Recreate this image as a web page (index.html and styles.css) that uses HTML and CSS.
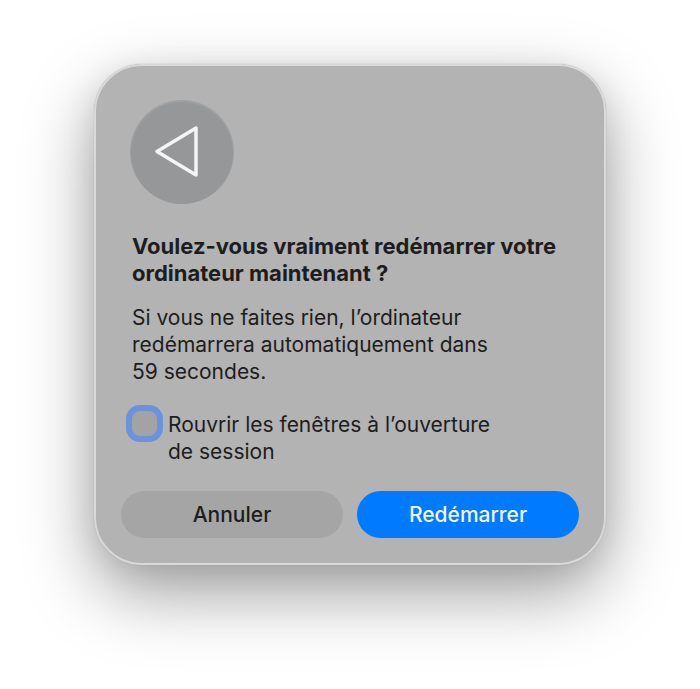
FILE: index.html
```
<!DOCTYPE html>
<html lang="fr">
    <head>
        <meta charset="utf-8">
        <meta name="viewport" content="width=device-width, initial-scale=1">
        <title>Redémarrer</title>
        <link rel="stylesheet" href="styles.css">
    </head>
    <body>
        <form class="dialog" role="alertdialog" aria-labelledby="title" aria-describedby="message">
            <div class="content">
                <svg class="icon" viewBox="0 0 106 106" aria-hidden="true">
                    <circle cx="53" cy="53" r="52" fill="#9fa0a0"/>
                    <circle cx="53" cy="54" r="51" fill="#969799"/>
                    <path d="M28 52.500L67 29V76Z" fill="none" stroke="#f5f5f7" stroke-width="3.500" stroke-linejoin="round"/>
                </svg>
                <h1 class="title" id="title">Voulez-vous vraiment redémarrer votre ordinateur maintenant&nbsp;?</h1>
                <p class="message" id="message">Si vous ne faites rien, l’ordinateur redémarrera automatiquement dans 59&nbsp;secondes.</p>
                <div class="option">
                    <input type="checkbox" class="checkbox" id="reopen">
                    <label for="reopen">Rouvrir les fenêtres à l’ouverture de&nbsp;session</label>
                </div>
            </div>
            <div class="buttons">
                <button type="button" class="button">Annuler</button>
                <button type="submit" class="button primary">Redémarrer</button>
            </div>
        </form>
    </body>
</html>
```
FILE: styles.css
```
* {
    box-sizing: border-box;
}
body {
    min-height: 100vh;
    margin: 0;
    padding: 64px 20px;
    background: #fff;
    color: #1d1d1e;
    font-family: Inter, "Liberation Sans", sans-serif;
    font-size: 21px;
    line-height: 27px;
}
.dialog {
    max-width: 512px;
    margin: 0 auto;
    padding: 33px 25px 25px;
    border: 2px solid #d9d9db;
    border-radius: 48px;
    background: #b3b3b3;
    box-shadow: 0 0 1px #999, 0 28px 70px rgba(0, 0, 0, 0.38), 0 6px 30px rgba(0, 0, 0, 0.08);
}
.content {
    padding: 0 11px;
}
.icon {
    display: block;
    width: 106px;
    height: 106px;
    margin: 0 -3px 28px;
}
.title {
    margin: 0 0 17px;
    font-size: 22px;
    font-weight: 700;
}
.message {
    max-width: 380px;
    margin: 0 0 26px;
}
.option {
    display: flex;
    gap: 11px;
    max-width: 380px;
    margin-bottom: 26px;
}
.checkbox {
    appearance: none;
    flex: none;
    width: 25px;
    height: 25px;
    margin: 0;
    border-radius: 8px;
    background: #a2a3a2;
    box-shadow: 0 0 0 6px #6b93dc;
}
.buttons {
    display: grid;
    grid-template-columns: 1fr 1fr;
    gap: 14px;
}
.button {
    height: 47px;
    padding: 0 16px;
    border: none;
    border-radius: 24px;
    background: #a5a5a5;
    color: #1d1d1e;
    font-family: inherit;
    font-size: 21px;
    font-weight: 500;
}
.primary {
    background: #007aff;
    color: #f5f5f7;
}
```
